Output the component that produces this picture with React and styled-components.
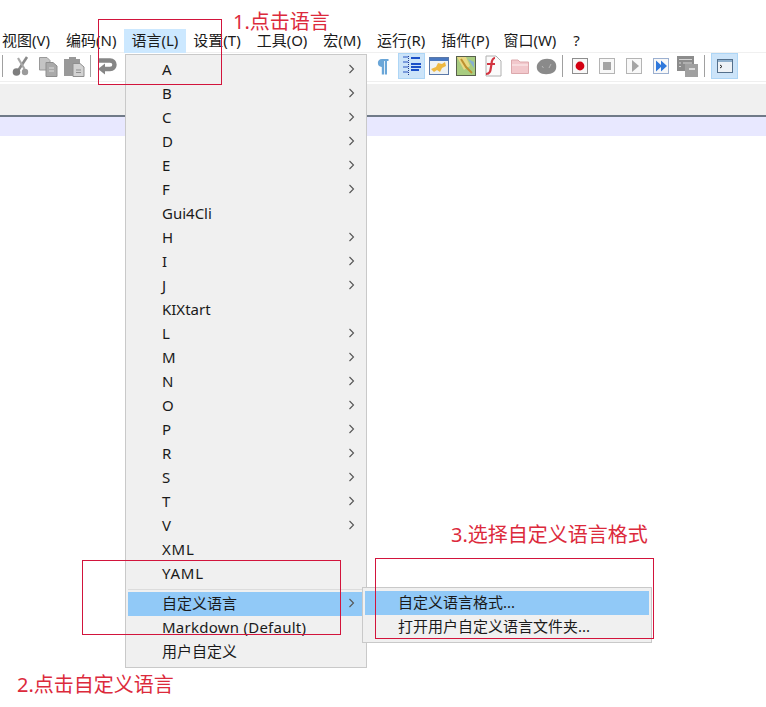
import React from "react";
import styled, { createGlobalStyle } from "styled-components";

const GlobalStyle = createGlobalStyle`
  html, body {
    margin: 0;
    padding: 0;
    background: #fff;
  }
  body {
    font-family: "Noto Sans", "Noto Sans CJK SC", sans-serif;
    color: #1a1a1a;
  }
`;

const Page = styled.div`
  position: relative;
  width: 766px;
  height: 707px;
  overflow: hidden;
  padding-top: 29px;
  box-sizing: border-box;
`;

const MenuBar = styled.div`
  display: flex;
  height: 24px;
  margin-left: -5.5px;
`;

const MenuItem = styled.div`
  display: flex;
  align-items: center;
  padding: 0 7.5px 3px;
  margin-right: ${({ $gap }) => $gap || 0}px;
  font-size: 15px;
  white-space: nowrap;
  background: ${({ $active }) => ($active ? "#cce8ff" : "transparent")};
`;

const Toolbar = styled.div`
  display: flex;
  align-items: flex-start;
  height: 28px;
  border-bottom: 1px solid #efefef;
  box-shadow: 0 -1px 0 #f0f0f0;
`;

const ToolButton = styled.div`
  display: flex;
  align-items: center;
  justify-content: center;
  flex: none;
  box-sizing: border-box;
  width: 27px;
  height: 26px;
  background: ${({ $active }) => ($active ? "#cce4f9" : "transparent")};
  border: 1px solid ${({ $active }) => ($active ? "#aed6f6" : "transparent")};
`;

const ToolSep = styled.div`
  flex: none;
  width: 1px;
  height: 22px;
  margin: 2px ${({ $right }) => $right || 3}px 0 ${({ $left }) => $left || 3}px;
  background: #a0a0a0;
`;

const ToolSpacer = styled.div`
  flex: none;
  width: ${({ $w }) => $w}px;
`;

const TabStrip = styled.div`
  height: 31px;
  margin-top: 2px;
  background: #f0f0f0;
  border-bottom: 2px solid #707a88;
`;

const CurrentLine = styled.div`
  height: 19px;
  background: #e8e8ff;
`;

const Dropdown = styled.div`
  position: absolute;
  left: ${({ $x }) => $x}px;
  top: ${({ $y }) => $y}px;
  width: ${({ $w }) => $w}px;
  box-sizing: border-box;
  padding: 3px 2px;
  background: #f0f0f0;
  border: 1px solid #c9c9c9;
`;

const Row = styled.div`
  display: flex;
  align-items: center;
  justify-content: space-between;
  box-sizing: border-box;
  height: 24px;
  padding: 0 9px 3px ${({ $indent }) => $indent}px;
  font-size: 15px;
  letter-spacing: ${({ $track }) => $track || 0}px;
  white-space: nowrap;
  background: ${({ $hot }) => ($hot ? "#91c9f7" : "transparent")};
`;

const RowArrow = styled.span`
  display: flex;
  margin-top: 1px;
`;

const Divider = styled.div`
  height: 6px;
  display: flex;
  align-items: center;
  &::after {
    content: "";
    width: 100%;
    height: 1px;
    background: #dcdcdc;
  }
`;

const Callout = styled.div`
  position: absolute;
  left: ${({ $x }) => $x}px;
  top: ${({ $y }) => $y}px;
  width: ${({ $w }) => $w}px;
  height: ${({ $h }) => $h}px;
  box-sizing: border-box;
  border: 1px solid #d2143c;
`;

const Note = styled.div`
  position: absolute;
  left: ${({ $x }) => $x}px;
  top: ${({ $y }) => $y}px;
  font-size: 20px;
  line-height: 20px;
  color: #dc2a3c;
  white-space: nowrap;
`;

const Chevron = () => (
  <RowArrow>
    <svg width="7" height="10" viewBox="0 0 7 10">
      <path d="M1.5 1 L5.5 5 L1.5 9" fill="none" stroke="#555" strokeWidth="1.1" />
    </svg>
  </RowArrow>
);

const CutIcon = () => (
  <svg width="18" height="21" viewBox="0 0 18 21">
    <path d="M15 1 L6.5 14" stroke="#8a8a8a" strokeWidth="2.6" fill="none" />
    <path d="M6 2 L12.5 13" stroke="#a8a8a8" strokeWidth="2.2" fill="none" />
    <circle cx="4.5" cy="16" r="3.8" fill="#7e7e7e" />
    <circle cx="13" cy="16" r="3.2" fill="#9a9a9a" />
  </svg>
);

const CopyIcon = () => (
  <svg width="20" height="21" viewBox="0 0 20 21">
    <path d="M1.5 1.5 H9 L12 4.5 V14 H1.5 Z" fill="#c4c4c4" stroke="#999" />
    <path d="M8 6.5 H15 L19 10 V20.5 H8 Z" fill="#aaa" stroke="#8e8e8e" />
    <path d="M11 12 H16 M11 15 H16" stroke="#dcdcdc" />
  </svg>
);

const PasteIcon = () => (
  <svg width="21" height="21" viewBox="0 0 21 21">
    <path d="M0 3 H5 V1 H12 V3 H16 V20 H0 Z" fill="#999" />
    <path d="M9 7.5 H16 L20 11 V20.5 H9 Z" fill="#d2d2d2" stroke="#8f8f8f" />
    <path d="M12 14 H17 M12 16.5 H17" stroke="#8f8f8f" />
  </svg>
);

const WrapIcon = () => (
  <svg width="20" height="18" viewBox="0 0 20 18">
    <path d="M2 3.5 H13 C19 3.5 19 12 13 12 H6" fill="none" stroke="#868686" strokeWidth="4.4" />
    <path d="M8 6.5 L1 12 L8 17.5 Z" fill="#868686" />
  </svg>
);

const PilcrowIcon = () => (
  <svg width="12" height="17" viewBox="0 0 12 17">
    <path d="M5 1 H11.5 V3 H10 V16.5 H7.8 V3 H7 V16.5 H4.8 V9 C-0.5 9 -0.5 1 5 1 Z" fill="#6aa6d8" />
  </svg>
);

const IndentIcon = () => (
  <svg width="20" height="22" viewBox="0 0 20 22">
    <path d="M1 2 H6 M1 7 H6 M1 12 H6 M1 17 H6" stroke="#2a55c0" strokeWidth="1" />
    <path d="M6.5 1 V21" stroke="#223a90" strokeWidth="1" strokeDasharray="1 1" />
    <path d="M9 3 H18 M9 9 H19 M9 12 H19 M9 15 H17" stroke="#1c50c8" strokeWidth="2" />
  </svg>
);

const UserLangIcon = () => (
  <svg width="20" height="18" viewBox="0 0 20 18">
    <rect x="0.5" y="0.5" width="19" height="17" fill="#eef2f4" stroke="#5a78a8" />
    <rect x="1" y="1" width="18" height="3" fill="#4a78c0" />
    <path d="M2 12 L7 10 L9 6 L13 7 L16 5 L17 9 L13 11 L11 15 L8 13 L5 15 Z" fill="#eeb840" />
  </svg>
);

const DocMapIcon = () => (
  <svg width="20" height="20" viewBox="0 0 20 20">
    <rect x="0.5" y="0.5" width="19" height="19" fill="#a8cc80" stroke="#58604c" />
    <path d="M1 1 L10 1 L14 10 L8 14 Z" fill="#e8d884" />
    <path d="M5 3 L10 11 L16 17" fill="none" stroke="#bd9030" strokeWidth="2" />
    <path d="M12 3 L18 6 V12 Z" fill="#88b0d0" />
  </svg>
);

const FuncListIcon = () => (
  <svg width="19" height="22" viewBox="0 0 19 22">
    <path d="M3 1 H13 L18 6 V21 H3 Z" fill="#fbfbfb" stroke="#b0b0b0" />
    <path d="M12 3 C8 3 9 8 8 12 C7.5 16 7 19 3 19" fill="none" stroke="#d23440" strokeWidth="2.2" />
    <path d="M4 9 H12" stroke="#d23440" strokeWidth="2" />
  </svg>
);

const FolderIcon = () => (
  <svg width="18" height="15" viewBox="0 0 18 15">
    <path d="M0.5 1 H7 L9 3 H17.5 V14.5 H0.5 Z" fill="#f2c8cc" stroke="#dca8ac" />
    <path d="M1 6 H17" stroke="#fae6e6" strokeWidth="1.4" />
  </svg>
);

const MonitorIcon = () => (
  <svg width="21" height="17" viewBox="0 0 21 17">
    <path d="M3 4 C6 0 15 0 18 3 C21 5 21 12 18 14 C14 17 6 17 3 14 C0 12 0 6 3 4 Z" fill="#8a8a8a" />
    <path d="M6 8 L7.5 10 M13 10 L15 6" stroke="#b8b8b8" strokeWidth="1" />
  </svg>
);

const RecordIcon = () => (
  <svg width="16" height="16" viewBox="0 0 16 16">
    <rect x="0.5" y="0.5" width="15" height="15" fill="#f8f8f8" stroke="#8e8e8e" />
    <circle cx="8" cy="8" r="4.4" fill="#d40012" />
  </svg>
);

const StopIcon = () => (
  <svg width="16" height="16" viewBox="0 0 16 16">
    <rect x="0.5" y="0.5" width="15" height="15" fill="#f8f8f8" stroke="#b4b4b4" />
    <rect x="4" y="4" width="8" height="8" fill="#a4a4a4" />
  </svg>
);

const PlayIcon = () => (
  <svg width="16" height="16" viewBox="0 0 16 16">
    <rect x="0.5" y="0.5" width="15" height="15" fill="#f8f8f8" stroke="#b4b4b4" />
    <path d="M6 2 L13 8 L6 14 Z" fill="#a4a4a4" />
  </svg>
);

const FastIcon = () => (
  <svg width="16" height="16" viewBox="0 0 16 16">
    <rect x="0.5" y="0.5" width="15" height="15" fill="#f8f8f8" stroke="#9cb0d0" />
    <path d="M3 2.5 L9 8 L3 13.5 Z M8 2.5 L14 8 L8 13.5 Z" fill="#2f78dc" />
  </svg>
);

const SaveMacroIcon = () => (
  <svg width="21" height="21" viewBox="0 0 21 21">
    <rect x="0" y="0" width="17" height="15" fill="#8c8c8c" />
    <path d="M2 3.5 H15 M2 7 H4 M6 7 H15 M2 10.5 H4" stroke="#d4d4d4" />
    <rect x="8" y="8" width="13" height="13" fill="#a0a0a0" />
    <path d="M12 13 H18" stroke="#eee" strokeWidth="1.5" />
  </svg>
);

const ConsoleIcon = () => (
  <svg width="16" height="14" viewBox="0 0 16 14">
    <rect x="0.5" y="0.5" width="15" height="13" fill="#eef2f6" stroke="#54708c" />
    <rect x="1" y="1" width="14" height="2" fill="#90b0cc" />
    <path d="M3 6 L5 7.5 L3 9" fill="none" stroke="#222" />
  </svg>
);

const topMenus = [
  { label: "视图(V)", gap: 1 },
  { label: "编码(N)" },
  { label: "语言(L)", active: true },
  { label: "设置(T)", gap: 1 },
  { label: "工具(O)", gap: 1 },
  { label: "宏(M)", gap: 1 },
  { label: "运行(R)", gap: 1 },
  { label: "插件(P)", gap: -1 },
  { label: "窗口(W)", gap: 2 },
  { label: "?" },
];

const languages = [
  ["A", true], ["B", true], ["C", true], ["D", true], ["E", true], ["F", true],
  ["Gui4Cli", false], ["H", true], ["I", true], ["J", true], ["KIXtart", false],
  ["L", true], ["M", true], ["N", true], ["O", true], ["P", true], ["R", true],
  ["S", true], ["T", true], ["V", true], ["XML", false], ["YAML", false],
];

export default function App() {
  return (
    <Page>
      <GlobalStyle />
      <MenuBar>
        {topMenus.map((m) => (
          <MenuItem key={m.label} $active={m.active} $gap={m.gap}>
            {m.label}
          </MenuItem>
        ))}
      </MenuBar>

      <Toolbar>
        <ToolSep $left={2} $right={2} />
        <ToolSpacer $w={2} />
        <ToolButton><CutIcon /></ToolButton>
        <ToolButton><CopyIcon /></ToolButton>
        <ToolButton><PasteIcon /></ToolButton>
        <ToolSep $left={2} $right={2} />
        <ToolButton><WrapIcon /></ToolButton>
        <ToolSpacer $w={249} />
        <ToolButton><PilcrowIcon /></ToolButton>
        <ToolSpacer $w={2} />
        <ToolButton $active><IndentIcon /></ToolButton>
        <ToolButton><UserLangIcon /></ToolButton>
        <ToolButton><DocMapIcon /></ToolButton>
        <ToolButton><FuncListIcon /></ToolButton>
        <ToolButton><FolderIcon /></ToolButton>
        <ToolButton><MonitorIcon /></ToolButton>
        <ToolSep $left={2} $right={3} />
        <ToolButton><RecordIcon /></ToolButton>
        <ToolButton><StopIcon /></ToolButton>
        <ToolButton><PlayIcon /></ToolButton>
        <ToolButton><FastIcon /></ToolButton>
        <ToolButton><SaveMacroIcon /></ToolButton>
        <ToolSep />
        <ToolSpacer $w={3} />
        <ToolButton $active><ConsoleIcon /></ToolButton>
      </Toolbar>

      <TabStrip />
      <CurrentLine />

      <Dropdown $x={125} $y={54} $w={242}>
        {languages.map(([name, sub]) => (
          <Row key={name} $indent={34} $track={name === "YAML" || name === "XML" ? 0.8 : 0}>
            {name}
            {sub && <Chevron />}
          </Row>
        ))}
        <Divider />
        <Row $indent={34} $hot>
          自定义语言
          <Chevron />
        </Row>
        <Row $indent={34} $track={0.25}>Markdown (Default)</Row>
        <Row $indent={34}>用户自定义</Row>
      </Dropdown>

      <Dropdown $x={362} $y={587} $w={290}>
        <Row $indent={33} $hot>自定义语言格式...</Row>
        <Row $indent={33}>打开用户自定义语言文件夹...</Row>
      </Dropdown>

      <Callout $x={98} $y={19} $w={124} $h={66} />
      <Callout $x={82} $y={560} $w={259} $h={75} />
      <Callout $x={375} $y={558} $w={279} $h={81} />

      <Note $x={233} $y={12}>1.点击语言</Note>
      <Note $x={17} $y={675}>2.点击自定义语言</Note>
      <Note $x={451} $y={525}>3.选择自定义语言格式</Note>
    </Page>
  );
}
